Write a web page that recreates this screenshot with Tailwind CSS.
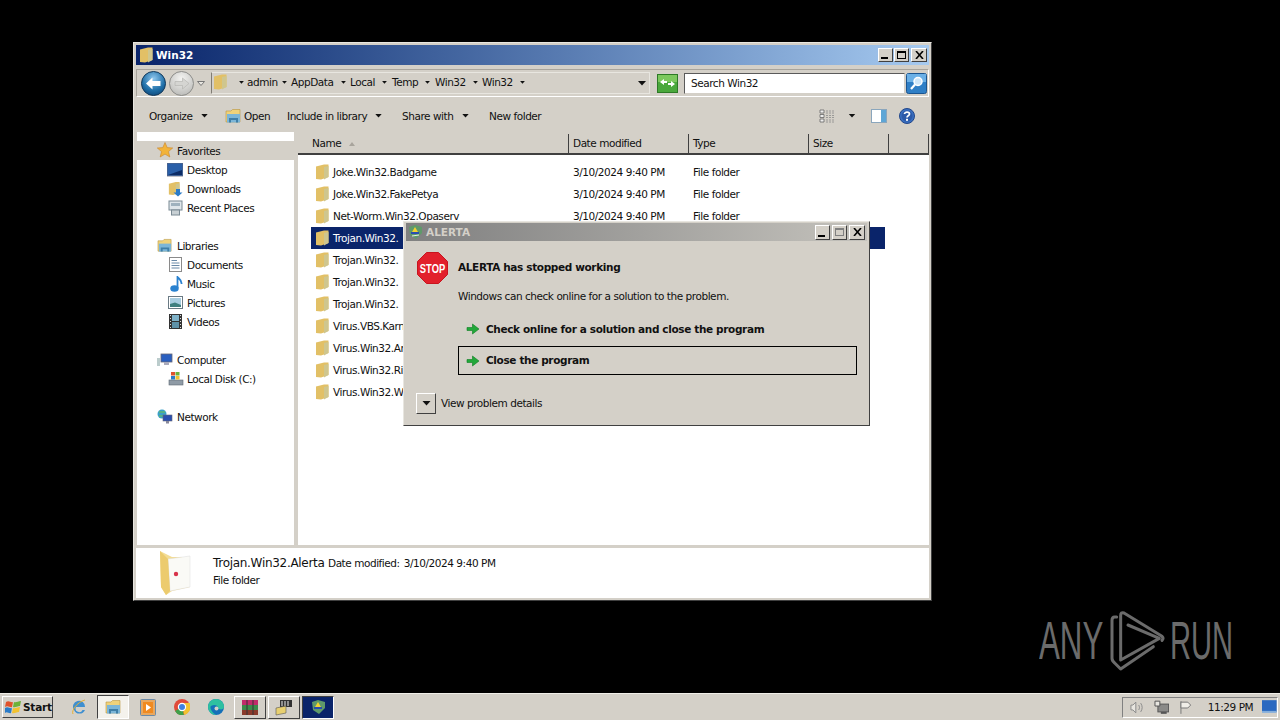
<!DOCTYPE html>
<html lang="en">
<head>
<meta charset="UTF-8">
<title>Win32</title>
<script src="https://cdn.jsdelivr.net/npm/@tailwindcss/browser@4"></script>
</head>
<body class="bg-black">
<svg class="hidden">
  <defs>
    <linearGradient id="fg" x1="0" x2="1" y1="0" y2="0"><stop offset="0" stop-color="#fbe99f"/><stop offset=".6" stop-color="#f6d873"/><stop offset="1" stop-color="#dcb850"/></linearGradient>
    <symbol id="folder" viewBox="0 0 14 16">
      <path d="M1 2.5 L9 .5 L13.5 .5 V13 L6 15.5 L1 15 Z" fill="#e2c066"/>
      <path d="M1 2.5 L5 1.5 L9 3 V15.5 L1 15 Z" fill="url(#fg)"/>
      <path d="M9 3 L13.5 2 V13 L9 15.5 Z" fill="#cfc68e"/>
    </symbol>
    <symbol id="arrow" viewBox="0 0 14 14">
      <path d="M1 5.5 H6.5 V2 L13 7 L6.5 12 V8.5 H1 Z" fill="#22a83a" stroke="#0d7d22" stroke-width=".6"/>
    </symbol>
    <symbol id="tri" viewBox="0 0 8 5"><path d="M0 0 H8 L4 4.5 Z" fill="#111"/></symbol>
  </defs>
</svg>

<div class="w-[1280px] h-[720px] flex flex-col overflow-hidden text-[10.5px] leading-none text-[#111] font-['DejaVu_Sans',sans-serif]">
  <!-- Desktop -->
  <div class="relative flex-1 bg-black">

    <!-- Explorer window -->
    <div class="absolute left-[133px] top-[42px] w-[799px] h-[559px] flex flex-col bg-[#d4d0c8] border border-t-[#e8e6e0] border-l-[#e8e6e0] border-r-[#404040] border-b-[#404040] p-[2px]">
      <div class="h-[20px] shrink-0 flex items-center bg-gradient-to-r from-[#0a246a] to-[#a6caf0] pl-[3px] pr-[2px]">
        <svg class="w-[14px] h-[16px]"><use href="#folder"/></svg>
        <span class="ml-[3px] text-white font-bold">Win32</span>
        <div class="ml-auto flex gap-[1px]">
          <div class="w-[15px] h-[14px] bg-[#d4d0c8] border border-t-white border-l-white border-r-[#404040] border-b-[#404040] flex items-end justify-center pb-[2px]"><div class="w-[7px] h-[2px] bg-black mr-[2px]"></div></div>
          <div class="w-[15px] h-[14px] bg-[#d4d0c8] border border-t-white border-l-white border-r-[#404040] border-b-[#404040] flex items-center justify-center"><div class="w-[9px] h-[8px] border border-black border-t-2"></div></div>
          <div class="w-[16px] h-[14px] ml-[1px] bg-[#d4d0c8] border border-t-white border-l-white border-r-[#404040] border-b-[#404040] flex items-center justify-center">
            <svg class="w-[9px] h-[8px]" viewBox="0 0 9 8"><path d="M1 0 L8 8 M8 0 L1 8" stroke="#000" stroke-width="1.6"/></svg>
          </div>
        </div>
      </div>

      <!-- Address bar -->
      <div class="h-[28px] mt-[4px] shrink-0 flex items-center border border-[#a8a49c] border-r-white border-b-white pl-[4px] pr-[1px]">
        <svg class="w-[25px] h-[25px]" viewBox="0 0 25 25">
          <defs><radialGradient id="bb" cx=".5" cy=".3" r=".8"><stop offset="0" stop-color="#8fc7ee"/><stop offset=".6" stop-color="#1f6fa8"/><stop offset="1" stop-color="#0b3f6e"/></radialGradient></defs>
          <circle cx="12.5" cy="12.5" r="12" fill="url(#bb)" stroke="#153a5c"/>
          <path d="M5 12.5 L11.5 6.5 V10 H19.5 V15 H11.5 V18.5 Z" fill="#fff"/>
        </svg>
        <svg class="w-[25px] h-[25px] ml-[3px]" viewBox="0 0 25 25">
          <defs><radialGradient id="gb" cx=".5" cy=".3" r=".8"><stop offset="0" stop-color="#f4f4f2"/><stop offset="1" stop-color="#b5b5b2"/></radialGradient></defs>
          <circle cx="12.5" cy="12.5" r="12" fill="url(#gb)" stroke="#8d8d8a"/>
          <path d="M20 12.5 L13.5 7 V10.5 H6 V14.5 H13.5 V18 Z" fill="#d5d5d2" stroke="#b0b0ad" stroke-width=".6"/>
        </svg>
        <svg class="w-[8px] h-[5px] ml-[3px]" viewBox="0 0 8 5"><path d="M.5 .5 H7.5 L4 4.5 Z" fill="#e8e6e0" stroke="#777"/></svg>
        <div class="ml-[6px] w-[439px] h-[22px] flex items-center border border-[#e8e6e0] border-l-[#807c74] pl-[1px] pb-[2px] -tracking-[0.45px]">
          <svg class="w-[14px] h-[16px] shrink-0"><use href="#folder"/></svg>
          <svg class="w-[5px] h-[3px] ml-[12px] shrink-0"><use href="#tri"/></svg>
          <span class="w-[38px] shrink-0 pl-[3px]">admin</span>
          <svg class="w-[5px] h-[3px] shrink-0"><use href="#tri"/></svg>
          <span class="w-[54px] shrink-0 pl-[4px]">AppData</span>
          <svg class="w-[5px] h-[3px] shrink-0"><use href="#tri"/></svg>
          <span class="w-[36px] shrink-0 pl-[4px]">Local</span>
          <svg class="w-[5px] h-[3px] shrink-0"><use href="#tri"/></svg>
          <span class="w-[38px] shrink-0 pl-[5px]">Temp</span>
          <svg class="w-[5px] h-[3px] shrink-0"><use href="#tri"/></svg>
          <span class="w-[43px] shrink-0 pl-[5px]">Win32</span>
          <svg class="w-[5px] h-[3px] shrink-0"><use href="#tri"/></svg>
          <span class="w-[42px] shrink-0 pl-[4px]">Win32</span>
          <svg class="w-[5px] h-[3px] shrink-0"><use href="#tri"/></svg>
          <svg class="w-[8px] h-[5px] ml-auto mr-[3px] mt-[2px] shrink-0"><use href="#tri"/></svg>
        </div>
        <svg class="w-[21px] h-[19px] ml-[7px]" viewBox="0 0 21 19">
          <rect x=".5" y=".5" width="20" height="18" fill="#4aa83c" stroke="#2d7a26"/>
          <rect x="1" y="1" width="19" height="7" fill="#7cc85e"/>
          <path d="M3 8 L7 5 V7 H10 V9 H7 V11 Z M18 10 L14 7 V9 H11 V11 H14 V13 Z" fill="#fff"/>
        </svg>
        <div class="ml-[6px] w-[221px] h-[21px] bg-white border border-t-[#5a5a5a] border-l-[#5a5a5a] border-r-[#d4d0c8] border-b-[#d4d0c8] flex items-center pl-[6px] -tracking-[0.45px]">Search Win32</div>
        <svg class="w-[21px] h-[21px] ml-[1px]" viewBox="0 0 21 21">
          <rect x=".5" y=".5" width="20" height="20" rx="2" fill="#2f7fc6" stroke="#1b5590"/>
          <rect x="1" y="1" width="19" height="8" fill="#6bb0e6"/>
          <circle cx="12" cy="8.5" r="4" fill="#cfe6f8" stroke="#fff" stroke-width="1.5"/>
          <path d="M9 11.5 L5 16" stroke="#fff" stroke-width="2.2"/>
        </svg>
      </div>

      <!-- Command bar -->
      <div class="h-[35px] shrink-0 flex items-center pt-[3px] pl-[13px] pr-[14px] -tracking-[0.45px]">
        <span class="w-[52px]">Organize</span>
        <svg class="w-[7px] h-[4px]"><use href="#tri"/></svg>
        <svg class="w-[17px] h-[16px] ml-[17px]" viewBox="0 0 17 16">
          <path d="M1 3 H6 L7.5 1.5 H15 V14 H1 Z" fill="#f0d27a" stroke="#b8963f" stroke-width=".6"/>
          <rect x="2" y="6" width="13" height="8.5" fill="#7cb6d8"/>
          <path d="M4 14.5 V10 H13 V14.5 H11 V12 H6 V14.5 Z" fill="#3f7fa8"/>
        </svg>
        <span class="ml-[2px] w-[43px]">Open</span>
        <span class="w-[88px]">Include in library</span>
        <svg class="w-[7px] h-[4px]"><use href="#tri"/></svg>
        <span class="ml-[20px] w-[60px]">Share with</span>
        <svg class="w-[7px] h-[4px]"><use href="#tri"/></svg>
        <span class="ml-[20px]">New folder</span>
        <svg class="w-[16px] h-[14px] ml-auto" viewBox="0 0 16 14">
          <path d="M1 1 H5 V4 H1 Z M1 5.5 H5 V8.5 H1 Z M1 10 H5 V13 H1 Z" fill="#eee" stroke="#666" stroke-width=".8"/>
          <path d="M7 2 H15 M7 4 H15 M7 6.5 H15 M7 8.5 H15 M7 11 H15 M7 13 H15" stroke="#8a8a8a" stroke-width=".8" stroke-dasharray="2 1"/>
        </svg>
        <svg class="w-[8px] h-[4px] ml-[13px]"><use href="#tri"/></svg>
        <svg class="w-[16px] h-[14px] ml-[15px]" viewBox="0 0 16 14">
          <rect x=".5" y=".5" width="15" height="13" fill="#fff" stroke="#8aa6bd"/>
          <rect x="10" y="1" width="5" height="12" fill="#5ea6d6"/>
        </svg>
        <svg class="w-[16px] h-[16px] ml-[12px]" viewBox="0 0 16 16">
          <circle cx="8" cy="8" r="7.5" fill="#3a6fc0" stroke="#22478a"/>
          <circle cx="8" cy="8" r="5.5" fill="#2c5aa8"/>
          <path d="M5.5 6 C5.5 3.5 10.5 3.5 10.5 6 C10.5 7.8 8 7.8 8 9.5" stroke="#fff" stroke-width="1.7" fill="none"/>
          <rect x="7" y="10.8" width="2" height="2" fill="#fff"/>
        </svg>
      </div>

      <!-- Main area -->
      <div class="flex-1 flex min-h-0 pl-[1px]">
        <div class="w-[157px] bg-white pt-[9px] -tracking-[0.45px]">
          <div class="h-[19px] flex items-center bg-[#d4d0c8] pl-[20px] pt-[2px]">
            <svg class="w-[16px] h-[16px] -mt-[3px]" viewBox="0 0 16 16"><path d="M8 .5 L10.2 5.6 L15.7 6 L11.5 9.6 L12.8 15 L8 12.1 L3.2 15 L4.5 9.6 L.3 6 L5.8 5.6 Z" fill="#f2b33a" stroke="#c9852a" stroke-width=".6"/></svg>
            <span class="ml-[4px]">Favorites</span>
          </div>
          <div class="h-[19px] flex items-center pl-[30px] pt-[2px]">
            <svg class="w-[16px] h-[14px] -mt-[2px]" viewBox="0 0 16 14"><rect width="16" height="13" fill="#2a5fa8" stroke="#667" stroke-width=".8"/><path d="M1 12 L15 7 V12 Z" fill="#0c2c66"/></svg>
            <span class="ml-[4px]">Desktop</span>
          </div>
          <div class="h-[19px] flex items-center pl-[31px] pt-[2px]">
            <svg class="w-[15px] h-[16px] -mt-[2px]" viewBox="0 0 15 16"><use href="#folder" width="12" height="15"/><path d="M8 8 H12 V11.5 H14.5 L10 15.5 L5.5 11.5 H8 Z" fill="#2a7bc8"/></svg>
            <span class="ml-[4px]">Downloads</span>
          </div>
          <div class="h-[19px] flex items-center pl-[31px] pt-[2px]">
            <svg class="w-[15px] h-[16px] -mt-[2px]" viewBox="0 0 15 16"><rect x="1" y="1" width="13" height="9" fill="#dfe6ea" stroke="#7a8a94"/><rect x="3" y="3" width="9" height="3" fill="#9fb2be"/><rect x="3.5" y="10" width="8" height="5" fill="#c8d0d4" stroke="#7a8a94"/></svg>
            <span class="ml-[4px]">Recent Places</span>
          </div>
          <div class="h-[19px]"></div>
          <div class="h-[19px] flex items-center pl-[20px] pt-[2px]">
            <svg class="w-[16px] h-[15px] -mt-[2px]" viewBox="0 0 17 16"><path d="M1 3 H6 L7.5 1.5 H15 V14 H1 Z" fill="#f0d27a" stroke="#b8963f" stroke-width=".6"/><rect x="2" y="6" width="13" height="8.5" fill="#7cb6d8"/><path d="M4 14.5 V10 H13 V14.5 H11 V12 H6 V14.5 Z" fill="#3f7fa8"/></svg>
            <span class="ml-[4px]">Libraries</span>
          </div>
          <div class="h-[19px] flex items-center pl-[32px] pt-[2px]">
            <svg class="w-[13px] h-[15px] -mt-[2px]" viewBox="0 0 13 15"><rect x=".5" y=".5" width="12" height="14" fill="#fff" stroke="#8a8a8a"/><path d="M2.5 3.5 H8 M2.5 6 H10.5 M2.5 8.5 H10.5 M2.5 11 H10.5" stroke="#6a8aa8"/></svg>
            <span class="ml-[5px]">Documents</span>
          </div>
          <div class="h-[19px] flex items-center pl-[33px] pt-[2px]">
            <svg class="w-[13px] h-[16px] -mt-[2px]" viewBox="0 0 13 16"><ellipse cx="4.5" cy="12.5" rx="4.2" ry="3.2" fill="#2a82d0"/><path d="M7.5 12 V1 C9 3 12 4 11.5 8" stroke="#2a82d0" stroke-width="1.8" fill="none"/></svg>
            <span class="ml-[4px]">Music</span>
          </div>
          <div class="h-[19px] flex items-center pl-[31px] pt-[2px]">
            <svg class="w-[15px] h-[13px] -mt-[2px]" viewBox="0 0 15 13"><rect x=".5" y=".5" width="14" height="12" fill="#fff" stroke="#6a7a84"/><rect x="2" y="2" width="11" height="9" fill="#a8cde0"/><path d="M2 11 V8 L7 6.5 L13 9 V11 Z" fill="#3f7f7f"/></svg>
            <span class="ml-[4px]">Pictures</span>
          </div>
          <div class="h-[19px] flex items-center pl-[32px] pt-[2px]">
            <svg class="w-[13px] h-[15px] -mt-[2px]" viewBox="0 0 13 15"><rect width="13" height="15" fill="#333"/><rect x="3" y="1" width="7" height="6" fill="#7fb2c8"/><rect x="3" y="8" width="7" height="6" fill="#5f92a8"/><path d="M1 1.5 H2 M1 4.5 H2 M1 7.5 H2 M1 10.5 H2 M1 13.5 H2 M11 1.5 H12 M11 4.5 H12 M11 7.5 H12 M11 10.5 H12 M11 13.5 H12" stroke="#ddd"/></svg>
            <span class="ml-[5px]">Videos</span>
          </div>
          <div class="h-[19px]"></div>
          <div class="h-[19px] flex items-center pl-[20px] pt-[2px]">
            <svg class="w-[16px] h-[14px] -mt-[2px]" viewBox="0 0 16 14"><rect x="4" y="1" width="11" height="8" fill="#2a5fc0" stroke="#667" stroke-width=".8"/><rect x="7" y="9" width="5" height="3" fill="#aab"/><rect x="0" y="5" width="3" height="8" fill="#bcc"/></svg>
            <span class="ml-[4px]">Computer</span>
          </div>
          <div class="h-[19px] flex items-center pl-[31px] pt-[2px]">
            <svg class="w-[16px] h-[15px] -mt-[2px]" viewBox="0 0 16 15"><rect x="1" y="9" width="14" height="5" fill="#8f9ba6" stroke="#5f6a74" stroke-width=".6"/><rect x="3" y="1" width="4" height="3.5" fill="#e0522c"/><rect x="7.5" y="1" width="4" height="3.5" fill="#6cb23a"/><rect x="3" y="5" width="4" height="3.5" fill="#2a7bc8"/><rect x="7.5" y="5" width="4" height="3.5" fill="#f2c230"/></svg>
            <span class="ml-[3px]">Local Disk (C:)</span>
          </div>
          <div class="h-[19px]"></div>
          <div class="h-[19px] flex items-center pl-[20px] pt-[2px]">
            <svg class="w-[16px] h-[15px] -mt-[2px]" viewBox="0 0 16 15"><circle cx="5" cy="5" r="4.5" fill="#3aa0c8"/><path d="M2 3 H8 M2 7 H7" stroke="#6fc04a"/><rect x="6" y="6" width="9" height="6" fill="#2a4fb0" stroke="#667" stroke-width=".6"/><rect x="9" y="12" width="3" height="2.5" fill="#889"/></svg>
            <span class="ml-[4px]">Network</span>
          </div>
        </div>
        <div class="w-[4px] bg-[#d4d0c8]"></div>

        <!-- File list -->
        <div class="flex-1 bg-white -tracking-[0.45px]">
          <div class="h-[23px] flex bg-[#d4d0c8] border-b-2 border-[#404040] pt-[2px]">
            <div class="w-[271px] flex items-center pl-[14px] border-r border-[#404040]">Name <svg class="w-[6px] h-[4px] ml-[8px]" viewBox="0 0 6 4"><path d="M3 0 L6 4 H0 Z" fill="#a8a49c"/></svg></div>
            <div class="w-[120px] flex items-center pl-[4px] border-r border-[#404040]">Date modified</div>
            <div class="w-[120px] flex items-center pl-[4px] border-r border-[#404040]">Type</div>
            <div class="w-[80px] flex items-center pl-[4px] border-r border-[#404040]">Size</div>
            <div class="w-[40px] border-r border-[#404040]"></div>
          </div>
          <div class="pt-[6px] pl-[13px] w-[587px]">
            <div class="h-[22px] flex items-center pl-[4px]"><svg class="w-[14px] h-[16px] mr-[4px]"><use href="#folder"/></svg><span class="w-[240px]">Joke.Win32.Badgame</span><span class="w-[120px]">3/10/2024 9:40 PM</span><span>File folder</span></div>
            <div class="h-[22px] flex items-center pl-[4px]"><svg class="w-[14px] h-[16px] mr-[4px]"><use href="#folder"/></svg><span class="w-[240px]">Joke.Win32.FakePetya</span><span class="w-[120px]">3/10/2024 9:40 PM</span><span>File folder</span></div>
            <div class="h-[22px] flex items-center pl-[4px]"><svg class="w-[14px] h-[16px] mr-[4px]"><use href="#folder"/></svg><span class="w-[240px]">Net-Worm.Win32.Opaserv</span><span class="w-[120px]">3/10/2024 9:40 PM</span><span>File folder</span></div>
            <div class="h-[22px] flex items-center pl-[4px] bg-[#0a246a] text-white"><svg class="w-[14px] h-[16px] mr-[4px]"><use href="#folder"/></svg><span>Trojan.Win32.</span></div>
            <div class="h-[22px] flex items-center pl-[4px]"><svg class="w-[14px] h-[16px] mr-[4px]"><use href="#folder"/></svg><span>Trojan.Win32.</span></div>
            <div class="h-[22px] flex items-center pl-[4px]"><svg class="w-[14px] h-[16px] mr-[4px]"><use href="#folder"/></svg><span>Trojan.Win32.</span></div>
            <div class="h-[22px] flex items-center pl-[4px]"><svg class="w-[14px] h-[16px] mr-[4px]"><use href="#folder"/></svg><span>Trojan.Win32.</span></div>
            <div class="h-[22px] flex items-center pl-[4px]"><svg class="w-[14px] h-[16px] mr-[4px]"><use href="#folder"/></svg><span>Virus.VBS.Karn</span></div>
            <div class="h-[22px] flex items-center pl-[4px]"><svg class="w-[14px] h-[16px] mr-[4px]"><use href="#folder"/></svg><span>Virus.Win32.Ar</span></div>
            <div class="h-[22px] flex items-center pl-[4px]"><svg class="w-[14px] h-[16px] mr-[4px]"><use href="#folder"/></svg><span>Virus.Win32.Ri</span></div>
            <div class="h-[22px] flex items-center pl-[4px]"><svg class="w-[14px] h-[16px] mr-[4px]"><use href="#folder"/></svg><span>Virus.Win32.W</span></div>
          </div>
        </div>
      </div>

      <!-- Details pane -->
      <div class="h-[50px] mt-[3px] shrink-0 bg-white flex items-center pl-[22px] -tracking-[0.45px]">
        <svg class="w-[36px] h-[48px]" viewBox="0 0 36 48">
          <path d="M2 2 L14 8 L32 8 V38 L14 42 L8 46 L3 38 Z" fill="#f3dc94"/>
          <path d="M10 10 L32 7 V38 L12 42 Z" fill="#fafaf6" stroke="#ddd" stroke-width=".5"/>
          <circle cx="18" cy="25" r="2.2" fill="#d8334a"/>
          <path d="M2 2 L10 10 L12 42 L8 46 L3 38 Z" fill="#eccb6e"/>
        </svg>
        <div class="ml-[19px] pb-[4px] flex flex-col gap-[6px]">
          <div class="flex items-end"><span class="text-[12px] w-[115px] -tracking-[0.3px]">Trojan.Win32.Alerta</span><span>Date modified:</span><span class="ml-[4px]">3/10/2024 9:40 PM</span></div>
          <span>File folder</span>
        </div>
      </div>
    </div>

    <!-- Error dialog -->
    <div class="absolute left-[403px] top-[221px] w-[467px] h-[205px] flex flex-col bg-[#d4d0c8] border border-t-[#e8e6e0] border-l-[#e8e6e0] border-r-[#404040] border-b-[#404040] px-[2px] pt-[1px]">
      <div class="h-[18px] shrink-0 flex items-center bg-gradient-to-r from-[#808080] to-[#c4c2bc] pl-[2px] pr-[2px]">
        <svg class="w-[15px] h-[16px]" viewBox="0 0 15 16"><path d="M1 3 L7 1 L14 3 V9 L8 15 L2 11 Z" fill="#5f9a6a"/><path d="M4 8 L7 3 L10 8 Z" fill="#f2d230"/><path d="M3 9 H11" stroke="#2a4fb0" stroke-width="2"/><path d="M4 12 L11 11" stroke="#e8f0e8"/></svg>
        <span class="ml-[3px] text-[#d4d0c8] font-bold">ALERTA</span>
        <div class="ml-auto flex gap-[2px]">
          <div class="w-[15px] h-[15px] bg-[#d4d0c8] border border-t-white border-l-white border-r-[#404040] border-b-[#404040] flex items-end justify-center pb-[2px]"><div class="w-[7px] h-[2px] bg-black mr-[2px]"></div></div>
          <div class="w-[15px] h-[15px] bg-[#d4d0c8] border border-t-white border-l-white border-r-[#404040] border-b-[#404040] flex items-center justify-center"><div class="w-[9px] h-[8px] border border-[#808080] border-t-2"></div></div>
          <div class="w-[16px] h-[15px] bg-[#d4d0c8] border border-t-white border-l-white border-r-[#404040] border-b-[#404040] flex items-center justify-center">
            <svg class="w-[9px] h-[8px]" viewBox="0 0 9 8"><path d="M1 0 L8 8 M8 0 L1 8" stroke="#000" stroke-width="1.6"/></svg>
          </div>
        </div>
      </div>
      <div class="flex pl-[11px] pt-[11px]">
        <svg class="w-[31px] h-[32px] shrink-0" viewBox="0 0 31 32">
          <path d="M9.5 .5 H21.5 L30.5 9.5 V22.5 L21.5 31.5 H9.5 L.5 22.5 V9.5 Z" fill="#e2202c" stroke="#c8141e"/>
          <text transform="translate(15.5 21) scale(.72 1)" text-anchor="middle" font-family="Liberation Sans, sans-serif" font-weight="700" font-size="13" fill="#fff">STOP</text>
        </svg>
        <div class="ml-[10px] flex-1 pr-[10px]">
          <div class="mt-[10px] font-bold -tracking-[0.36px]">ALERTA has stopped working</div>
          <div class="mt-[18px] -tracking-[0.45px]">Windows can check online for a solution to the problem.</div>
          <div class="mt-[14px] h-[28px] flex items-center pl-[8px] font-bold -tracking-[0.36px]"><svg class="w-[14px] h-[14px] mr-[6px]"><use href="#arrow"/></svg>Check online for a solution and close the program</div>
          <div class="mt-[3px] h-[29px] flex items-center pl-[7px] font-bold -tracking-[0.36px] border border-black"><svg class="w-[14px] h-[14px] mr-[6px]"><use href="#arrow"/></svg>Close the program</div>
        </div>
      </div>
      <div class="flex items-center pl-[10px] mt-[18px] -tracking-[0.45px]">
        <div class="w-[20px] h-[21px] flex items-center justify-center border border-t-white border-l-white border-r-[#404040] border-b-[#404040]"><svg class="w-[9px] h-[5px]"><use href="#tri"/></svg></div>
        <span class="ml-[5px]">View problem details</span>
      </div>
    </div>

    <!-- Watermark -->
    <div class="absolute left-[1039px] top-[605px] h-[70px] flex items-center text-[#6b6b6b] text-[53px] font-['Liberation_Sans',sans-serif]">
      <span class="w-[64px] shrink-0 origin-left scale-x-[0.59] whitespace-nowrap">ANY</span>
      <svg class="w-[75px] h-[70px] shrink-0 -ml-[3px]" viewBox="0 0 225 210" fill="none" stroke="#6b6b6b" stroke-width="9" stroke-linejoin="round" stroke-linecap="round">
        <path d="M50 36 H44 Q36 36 36 46 V160 Q36 168 44 174 L62 192 L160 125"/>
        <path d="M84 60 L178 100 L62 165 V32 Q62 20 72 24 L186 94 Q192 100 186 106"/>
      </svg>
      <span class="w-[61px] shrink-0 -ml-[5px] origin-left scale-x-[0.55] whitespace-nowrap">RUN</span>
    </div>
  </div>

  <!-- Taskbar -->
  <div class="h-[27px] shrink-0 flex items-center bg-[#d4d0c8] border-t border-[#f0eee8] pl-[2px]">
    <div class="w-[51px] h-[22px] flex items-center pl-[2px] border border-t-white border-l-white border-r-[#404040] border-b-[#404040] font-bold -tracking-[0.2px]">
      <svg class="w-[16px] h-[15px]" viewBox="0 0 16 15"><path d="M1 2 C4 0 6 3 8 2 L7 7 C5 8 3 5 0 7 Z" fill="#e0522c"/><path d="M9 2 C11 3 13 1 16 1 L15 6 C12 6 10 8 8 7 Z" fill="#6cb23a"/><path d="M0 8 C3 6 5 9 7 8 L6 13 C4 14 2 11 0 13 Z" fill="#2a7bc8"/><path d="M8 8 C10 9 12 7 15 7 L14 12 C11 12 9 14 7 13 Z" fill="#f2c230"/></svg>
      <span class="ml-[2px]">Start</span>
    </div>
    <svg class="w-[16px] h-[17px] ml-[18px]" viewBox="0 0 16 17"><path d="M3 11 A6 6 0 1 1 14 8 H5 A3.5 3.5 0 0 0 11.5 11 H14 A6 6 0 0 1 3 11 Z" fill="#3f8fd0"/><path d="M2 15 C0 12 6 3 14 1" stroke="#e8b030" fill="none"/></svg>
    <div class="ml-[10px] w-[32px] h-[24px] flex items-center justify-center bg-[#f4f2ec] border border-t-[#404040] border-l-[#404040] border-r-white border-b-white">
      <svg class="w-[17px] h-[16px]" viewBox="0 0 17 16"><path d="M1 3 H6 L7.5 1.5 H15 V14 H1 Z" fill="#f0d27a" stroke="#b8963f" stroke-width=".6"/><rect x="2" y="6" width="13" height="8.5" fill="#7cb6d8"/><path d="M4 14.5 V10 H13 V14.5 H11 V12 H6 V14.5 Z" fill="#3f7fa8"/></svg>
    </div>
    <svg class="w-[16px] h-[17px] ml-[11px]" viewBox="0 0 16 17"><rect x=".5" y=".5" width="15" height="16" rx="1" fill="#e8a860" stroke="#6a8aa8"/><rect x="3" y="3" width="10" height="11" fill="#f08a20"/><path d="M6 5 L11 8.5 L6 12 Z" fill="#fff"/></svg>
    <svg class="w-[16px] h-[16px] ml-[18px]" viewBox="0 0 16 16"><circle cx="8" cy="8" r="8" fill="#e04a3a"/><path d="M8 8 L1 12 A8 8 0 0 0 10 15.8 Z" fill="#3fa04a"/><path d="M8 4 H15.5 A8 8 0 0 1 10 15.8 Z" fill="#f2c230"/><circle cx="8" cy="8" r="3.6" fill="#3f80e0" stroke="#fff" stroke-width="1.2"/></svg>
    <svg class="w-[16px] h-[16px] ml-[18px]" viewBox="0 0 16 16"><circle cx="8" cy="8" r="8" fill="#1470b8"/><path d="M0 8 A8 8 0 0 1 16 8 C16 11 11 11 10 9 C10 6 6 5 3 7 C1.5 8 3 13 8 16 A8 8 0 0 1 0 8 Z" fill="#2ec0a0"/><circle cx="8.5" cy="9.5" r="2" fill="#d4d0c8"/></svg>
    <div class="ml-[10px] w-[32px] h-[23px] flex items-center justify-center border border-t-white border-l-white border-r-[#404040] border-b-[#404040]">
      <svg class="w-[18px] h-[17px]" viewBox="0 0 18 17"><rect x="1" y="1" width="16" height="5" fill="#c02a6a"/><rect x="1" y="6" width="16" height="5" fill="#3a8a4a"/><rect x="1" y="11" width="16" height="5" fill="#8a3a2a"/><path d="M6 1 V16 M12 1 V16" stroke="#333"/></svg>
    </div>
    <div class="ml-[2px] w-[32px] h-[23px] flex items-center justify-center border border-t-white border-l-white border-r-[#404040] border-b-[#404040]">
      <svg class="w-[18px] h-[17px]" viewBox="0 0 18 17"><rect x="5" y="1" width="12" height="7" fill="#333"/><path d="M7 2 V7 M10 2 V7 M13 2 V7" stroke="#eee"/><path d="M1 9 L11 7 V14 L1 16 Z" fill="#e8d070" stroke="#555" stroke-width=".6"/></svg>
    </div>
    <div class="ml-[2px] w-[32px] h-[23px] flex items-center justify-center bg-[#0a246a] border border-t-[#404040] border-l-[#404040] border-r-white border-b-white">
      <svg class="w-[15px] h-[16px]" viewBox="0 0 15 16"><path d="M1 3 L7 1 L14 3 V9 L8 15 L2 11 Z" fill="#5f9a6a"/><path d="M4 8 L7 3 L10 8 Z" fill="#f2d230"/><path d="M3 9 H11" stroke="#2a4fb0" stroke-width="2"/></svg>
    </div>
    <div class="ml-auto mr-[2px] w-[156px] h-[21px] flex items-center border border-t-[#808080] border-l-[#808080] border-r-white border-b-white pl-[6px] -tracking-[0.45px]">
      <svg class="w-[16px] h-[15px]" viewBox="0 0 16 15" fill="none" stroke="#8a8a8a"><path d="M2 5 H4 L7 2 V13 L4 10 H2 Z" fill="#e8e6e0"/><path d="M10 5 C11 7 11 8 10 10 M12 3 C14 6 14 9 12 12"/></svg>
      <svg class="w-[16px] h-[15px] ml-[9px]" viewBox="0 0 16 15"><rect x="4" y="4" width="11" height="8" fill="#8a8a88" stroke="#555"/><path d="M1 1 H6 V6 H1 Z" fill="#e8e6e0" stroke="#555"/><rect x="7" y="12" width="6" height="2" fill="#555"/></svg>
      <svg class="w-[15px] h-[15px] ml-[10px]" viewBox="0 0 15 15" fill="#f0eee8" stroke="#777"><path d="M2 1 V14" /><path d="M2 2 H9 L12 5 L9 8 H2 Z"/></svg>
      <span class="ml-[14px] w-[54px]">11:29 PM</span>
      <svg class="w-[15px] h-[14px] ml-[2px]" viewBox="0 0 15 14"><rect width="15" height="12" fill="#2a68c0"/><rect y="11" width="15" height="2" fill="#84aedc"/></svg>
    </div>
  </div>
</div>
</body>
</html>
